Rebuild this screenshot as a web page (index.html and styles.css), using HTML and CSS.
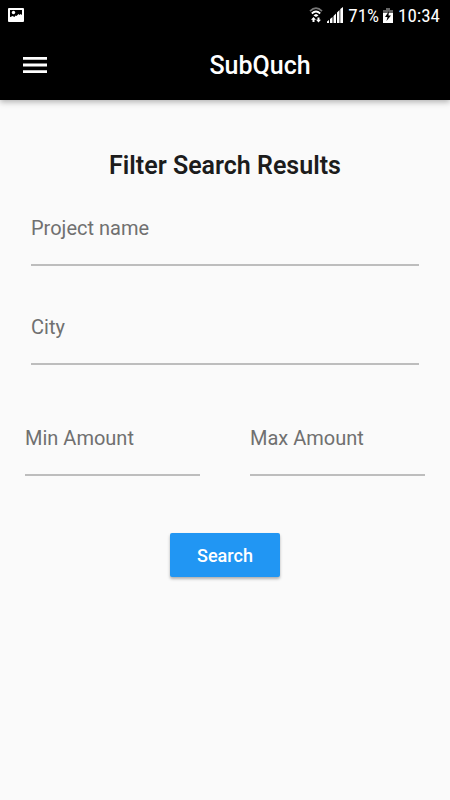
FILE: index.html
```html
<!DOCTYPE html>
<html lang="en">
<head>
<meta charset="utf-8">
<meta name="viewport" content="width=device-width, initial-scale=1">
<title>SubQuch</title>
<link rel="stylesheet" href="styles.css">
</head>
<body>
<header class="top">
  <div class="status">
    <svg class="photo" width="16" height="14" viewBox="0 0 16 14" aria-hidden="true">
      <rect width="16" height="14" rx="1" fill="#fff"/>
      <path d="M2 2h12v5l-1.500-1-1 1-1-1-2 2-1-.5-1 1.500-2-1-2 1H2z" fill="#000"/>
      <circle cx="5.500" cy="4.500" r="1.700" fill="#fff"/>
    </svg>
    <svg class="wifi" width="14" height="16" viewBox="0 0 14 16" fill="none" aria-hidden="true">
      <path d="M1 4.200Q7-1.800 13 4.200" stroke="#777" stroke-width="1.700"/>
      <path d="M2.800 6.500Q7 2.500 11.200 6.500" stroke="#fff" stroke-width="1.800"/>
      <path d="M4.500 8.500Q7 5.500 9.500 8.500L7 10z" fill="#fff"/>
      <path d="M4.500 10L2 12.800h1.500V15h2v-2.200H7zM9.500 15.500l2.500-2.800h-1.500v-2.200h-2v2.200H7z" fill="#fff"/>
    </svg>
    <svg class="signal" width="16" height="16" viewBox="0 0 16 16" fill="#fff" aria-hidden="true">
      <path d="M0 14.500L2 13v3H0zM3 12l2.500-2v6H3zM6.500 9L9 6.500V16H6.500zM10 5.500L12.500 3v13H10zM13.300 2L16 0v16h-2.700z"/>
    </svg>
    <span class="percent">71%</span>
    <svg class="battery" width="10" height="15" viewBox="0 0 10 15" aria-hidden="true">
      <path d="M3 0h4v2h3v3H0V2h3z" fill="#666"/>
      <path d="M0 5h10v10H0z" fill="#fff"/>
      <path d="M6 3L2 9h2.500L3.500 13 8 7.500H5.500z" fill="#000"/>
    </svg>
    <span>10:34</span>
  </div>
  <div class="appbar">
    <button class="menu" type="button" aria-label="Menu">
      <svg width="24" height="16" viewBox="0 0 24 16" fill="#fff" aria-hidden="true"><path d="M0 0h24v2.800H0zM0 6.500h24v3H0zM0 13.200h24V16H0z"/></svg>
    </button>
    <h1>SubQuch</h1>
  </div>
</header>
<main>
  <h2>Filter Search Results</h2>
  <form>
    <div class="stack">
      <div class="field">
        <label for="project">Project name</label>
        <input id="project" type="text">
      </div>
      <div class="field">
        <label for="city">City</label>
        <input id="city" type="text">
      </div>
    </div>
    <div class="amounts">
      <div class="field">
        <label for="min">Min Amount</label>
        <input id="min" type="text" inputmode="numeric">
      </div>
      <div class="field">
        <label for="max">Max Amount</label>
        <input id="max" type="text" inputmode="numeric">
      </div>
    </div>
    <button class="search" type="button">Search</button>
  </form>
</main>
</body>
</html>
```
FILE: styles.css
```css
* {
  box-sizing: border-box;
}

body {
  margin: 0;
  min-height: 100vh;
  background: #fafafa;
  color: #1c1c1c;
  font-family: Roboto, "Liberation Sans", sans-serif;
}

.top {
  background: #000;
  color: #fff;
  box-shadow: 0 2px 6px rgba(0, 0, 0, 0.3);
}

.status {
  display: flex;
  align-items: center;
  height: 30px;
  padding: 0 10px 0 8px;
  font-family: "Roboto Condensed", "Liberation Sans Narrow", Roboto, sans-serif;
  font-size: 19px;
}

.wifi {
  margin-left: auto;
  margin-right: 4px;
}

.signal {
  margin-right: 5px;
}

.battery {
  margin: 0 5px 0 4px;
}

.appbar {
  display: grid;
  grid-template-columns: 70px 1fr;
  align-items: center;
  height: 70px;
}

.menu {
  display: grid;
  place-items: center;
  height: 70px;
  padding: 0;
  border: 0;
  background: none;
}

h1,
h2 {
  margin: 0;
  font-size: 25px;
  line-height: 32px;
  font-weight: 500;
  text-align: center;
}

h1 {
  padding-top: 2px;
}

main {
  padding: 50px 25px;
}

h2 {
  font-weight: 600;
}

.stack {
  display: grid;
  gap: 35px;
  padding: 20px 6px 0;
}

.field {
  display: grid;
  min-width: 0;
}

.field label,
.field input {
  grid-area: 1 / 1;
}

.field label {
  padding-top: 14px;
  color: #707070;
  font-size: 20px;
  line-height: 24px;
  pointer-events: none;
}

.field input {
  width: 100%;
  height: 64px;
  padding: 8px 0 20px;
  border: 0;
  border-bottom: 2px solid #bdbdbd;
  border-radius: 0;
  background: none;
  font: inherit;
  font-size: 20px;
  outline: none;
}

.amounts {
  display: grid;
  grid-template-columns: 1fr 1fr;
  gap: 50px;
  padding-top: 47px;
}

.search {
  display: block;
  width: 110px;
  height: 44px;
  margin: 57px auto 0;
  padding: 0;
  border: 0;
  border-radius: 2px;
  background: #2196f3;
  color: #fff;
  font: inherit;
  font-size: 18px;
  font-weight: 500;
  box-shadow: 0 2px 3px rgba(0, 0, 0, 0.3);
}
```
